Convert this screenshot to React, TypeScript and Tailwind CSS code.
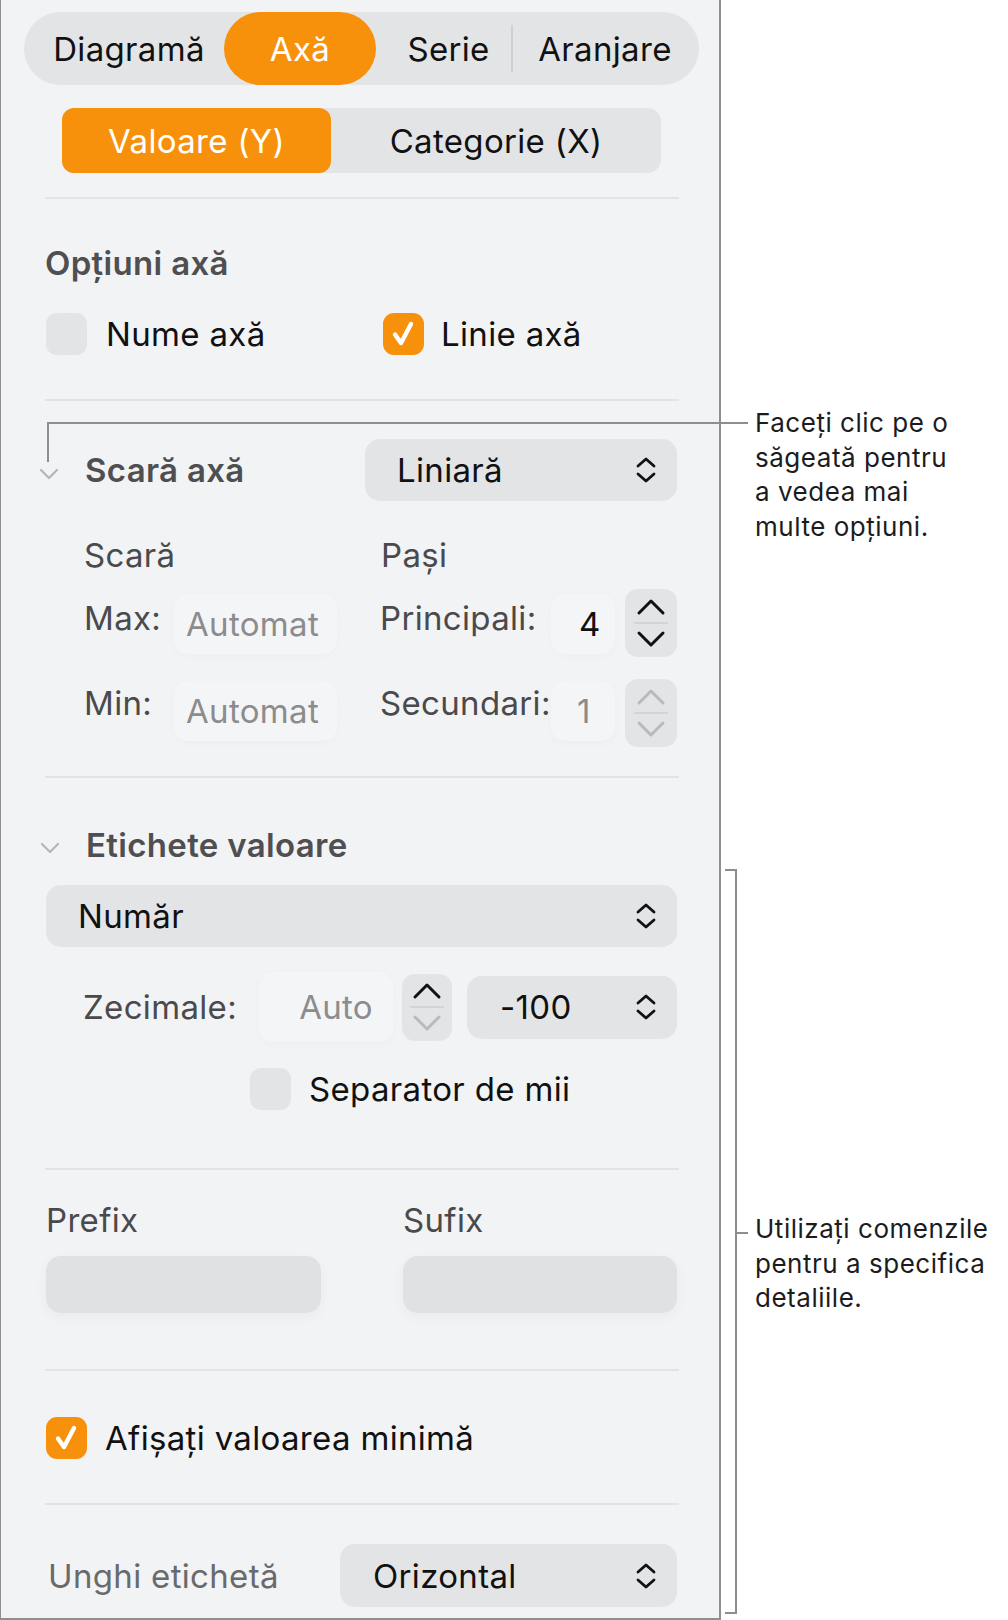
import React from 'react';

const ORANGE = 'bg-[#f7910b]';

function UpDown() {
  return (
    <svg width="22" height="28" viewBox="0 0 22 28" fill="none" stroke="#111" strokeWidth="2.8" strokeLinecap="round" strokeLinejoin="round">
      <path d="M3 10 L11 3 L19 10" />
      <path d="M3 18 L11 25 L19 18" />
    </svg>
  );
}

function Collapse() {
  return (
    <svg width="22" height="14" viewBox="0 0 22 14" fill="none" stroke="#b4b5b8" strokeWidth="2.2" strokeLinecap="round" strokeLinejoin="round">
      <path d="M3 3 L11 11 L19 3" />
    </svg>
  );
}

function Check() {
  return (
    <svg width="30" height="30" viewBox="0 0 30 30" fill="none" stroke="#fff" strokeWidth="4.4" strokeLinecap="round" strokeLinejoin="round">
      <path d="M6 15.5 L12 24 L22 5" />
    </svg>
  );
}

function Box({ on }: { on?: boolean }) {
  return (
    <div className={`w-[41px] h-[42px] rounded-[11px] flex items-center justify-center shrink-0 ${on ? ORANGE : 'bg-[#e3e4e6]'}`}>
      {on && <Check />}
    </div>
  );
}

function Stepper({ upDark, downDark, w = 52, h = 68 }: { upDark: boolean; downDark: boolean; w?: number; h?: number }) {
  const up = upDark ? '#111' : '#b9babd';
  const down = downDark ? '#111' : '#b9babd';
  return (
    <div className="rounded-[13px] bg-[#e3e4e6] flex flex-col items-center justify-center shrink-0" style={{ width: w, height: h }}>
      <svg width="32" height="20" viewBox="0 0 32 20" fill="none" stroke={up} strokeWidth="3" strokeLinecap="round" strokeLinejoin="round">
        <path d="M4 16 L16 4 L28 16" />
      </svg>
      <div className="w-[34px] h-[2px] bg-[#d3d4d6] my-[5px]" />
      <svg width="32" height="20" viewBox="0 0 32 20" fill="none" stroke={down} strokeWidth="3" strokeLinecap="round" strokeLinejoin="round">
        <path d="M4 4 L16 16 L28 4" />
      </svg>
    </div>
  );
}

function Dropdown({ label, className }: { label: string; className: string }) {
  return (
    <div className={`h-full rounded-[15px] bg-[#e3e4e6] flex items-center justify-between pr-[20px] text-[#111] ${className}`}>
      <span>{label}</span>
      <UpDown />
    </div>
  );
}

function Divider() {
  return <div className="h-[2px] bg-[#e2e3e5] shrink-0" />;
}

function Field({ text, className }: { text: string; className: string }) {
  return (
    <div className={`h-[60px] rounded-[14px] bg-[#f4f5f7] shadow-[0_2px_10px_rgba(0,0,0,0.025)] flex items-center text-[#8c8c8e] ${className}`}>
      {text}
    </div>
  );
}

export default function App() {
  return (
    <div className="relative w-[1008px] h-[1620px] bg-white flex font-[family-name:Inter,sans-serif] text-[33px] leading-[40px] tracking-[0.01em]">
      {/* panel */}
      <div className="w-[721px] h-[1620px] shrink-0 bg-[#f2f3f5] border-l border-r-2 border-b-2 border-[#8f8f8f] flex flex-col">
        {/* tabs */}
        <div className="mt-[12px] ml-[23px] w-[675px] h-[73px] rounded-full bg-[#e3e4e6] flex items-center text-[#111]">
          <div className="w-[200px] text-center pl-[10px]">Diagramă</div>
          <div className={`w-[152px] h-full rounded-full ${ORANGE} text-white flex items-center justify-center`}>Axă</div>
          <div className="w-[135px] text-center pl-[10px]">Serie</div>
          <div className="w-[2px] h-[47px] bg-[#cfd0d2]" />
          <div className="flex-1 text-center pr-[2px]">Aranjare</div>
        </div>

        {/* value / category */}
        <div className="mt-[23px] ml-[61px] w-[599px] h-[65px] rounded-[14px] bg-[#e3e4e6] flex items-center text-[#111]">
          <div className={`w-[269px] h-full rounded-[12px] ${ORANGE} text-white flex items-center justify-center`}>Valoare (Y)</div>
          <div className="flex-1 text-center">Categorie (X)</div>
        </div>

        <div className="ml-[44px] w-[634px] flex flex-col">
          <div className="mt-[24px]"><Divider /></div>

          {/* axis options */}
          <div className="mt-[44px] h-[40px] font-semibold text-[#4f4f51]">Opțiuni axă</div>
          <div className="mt-[30px] h-[42px] flex items-center text-[#111]">
            <div className="ml-[1px] w-[337px] flex items-center gap-[19px]">
              <Box />
              <span>Nume axă</span>
            </div>
            <div className="flex items-center gap-[17px]">
              <Box on />
              <span>Linie axă</span>
            </div>
          </div>
          <div className="mt-[44px]"><Divider /></div>

          {/* scale */}
          <div className="mt-[38px] h-[62px] flex items-center">
            <div className="-ml-[7px] w-[47px] pt-[8px]"><Collapse /></div>
            <div className="w-[280px] font-semibold text-[#4f4f51]">Scară axă</div>
            <Dropdown label="Liniară" className="w-[312px] pl-[32px]" />
          </div>

          <div className="mt-[34px] h-[40px] flex text-[#4a4a4c]">
            <div className="ml-[39px] w-[297px]">Scară</div>
            <div>Pași</div>
          </div>

          <div className="mt-[14px] h-[68px] flex items-center">
            <div className="ml-[39px] w-[90px] text-[#4a4a4c] -mt-[10px]">Max:</div>
            <Field text="Automat" className="w-[163px] pl-[12px] mt-[2px]" />
            <div className="ml-[43px] w-[171px] text-[#4a4a4c] -mt-[10px]">Principali:</div>
            <Field text="4" className="w-[64px] pl-[28px] mt-[2px] !text-[#111]" />
            <div className="ml-[10px]"><Stepper upDark downDark /></div>
          </div>

          <div className="mt-[22px] h-[68px] flex items-center">
            <div className="ml-[39px] w-[90px] text-[#4a4a4c] -mt-[20px]">Min:</div>
            <Field text="Automat" className="w-[163px] pl-[12px] -mt-[4px]" />
            <div className="ml-[43px] w-[171px] text-[#4a4a4c] -mt-[20px]">Secundari:</div>
            <Field text="1" className="w-[64px] pl-[26px] -mt-[4px]" />
            <div className="ml-[10px]"><Stepper upDark={false} downDark={false} /></div>
          </div>

          <div className="mt-[29px]"><Divider /></div>

          {/* value labels */}
          <div className="mt-[47px] h-[40px] flex items-center">
            <div className="-ml-[6px] w-[47px] pt-[6px]"><Collapse /></div>
            <div className="font-semibold text-[#4f4f51]">Etichete valoare</div>
          </div>

          <div className="mt-[20px] h-[62px] ml-[1px]">
            <Dropdown label="Număr" className="w-[631px] pl-[32px]" />
          </div>

          <div className="mt-[25px] h-[70px] flex items-center">
            <div className="ml-[38px] w-[176px] text-[#4a4a4c]">Zecimale:</div>
            <Field text="Auto" className="w-[134px] h-[70px] justify-end pr-[20px]" />
            <div className="ml-[9px]"><Stepper upDark downDark={false} w={50} h={67} /></div>
            <div className="ml-[15px] h-[63px]">
              <Dropdown label="-100" className="w-[210px] pl-[33px]" />
            </div>
          </div>

          <div className="mt-[26px] h-[42px] flex items-center text-[#111]">
            <div className="ml-[205px]"><Box /></div>
            <span className="ml-[18px]">Separator de mii</span>
          </div>

          <div className="mt-[58px]"><Divider /></div>

          {/* prefix / suffix */}
          <div className="mt-[30px] h-[40px] flex text-[#4a4a4c]">
            <div className="ml-[1px] w-[357px]">Prefix</div>
            <div>Sufix</div>
          </div>
          <div className="mt-[16px] h-[57px] flex">
            <div className="ml-[1px] w-[275px] rounded-[15px] bg-[#e0e1e3] shadow-[0_4px_14px_rgba(0,0,0,0.04)]" />
            <div className="ml-[82px] w-[274px] rounded-[15px] bg-[#e0e1e3] shadow-[0_4px_14px_rgba(0,0,0,0.04)]" />
          </div>

          <div className="mt-[56px]"><Divider /></div>

          <div className="mt-[46px] h-[41px] flex items-center text-[#111]">
            <div className="ml-[1px]"><Box on /></div>
            <span className="ml-[18px]">Afișați valoarea minimă</span>
          </div>

          <div className="mt-[45px]"><Divider /></div>

          <div className="mt-[39px] h-[63px] flex items-center">
            <div className="ml-[3px] w-[292px] text-[#6a6a6c]">Unghi etichetă</div>
            <Dropdown label="Orizontal" className="w-[337px] pl-[33px]" />
          </div>
        </div>
      </div>

      {/* annotations */}
      <div className="flex-1 flex flex-col pl-[34px] text-[26px] leading-[34.5px] tracking-[0.02em] text-[#1c1c1e]">
        <p className="mt-[406px]">
          Faceți clic pe o<br />săgeată pentru<br />a vedea mai<br />multe opțiuni.
        </p>
        <p className="mt-[668px]">
          Utilizați comenzile<br />pentru a specifica<br />detaliile.
        </p>
      </div>

      {/* callout line to the scale chevron */}
      <div className="absolute left-[47px] top-[422px] w-[701px] h-[40px] border-l-2 border-t-2 border-[#8e8e8e]" />
      {/* bracket around the value label controls */}
      <div className="absolute left-[725px] top-[869px] w-[12px] h-[745px] border-t-2 border-r-2 border-b-2 border-[#8e8e8e]" />
      <div className="absolute left-[735px] top-[1232px] w-[13px] h-[2px] bg-[#8e8e8e]" />
    </div>
  );
}
